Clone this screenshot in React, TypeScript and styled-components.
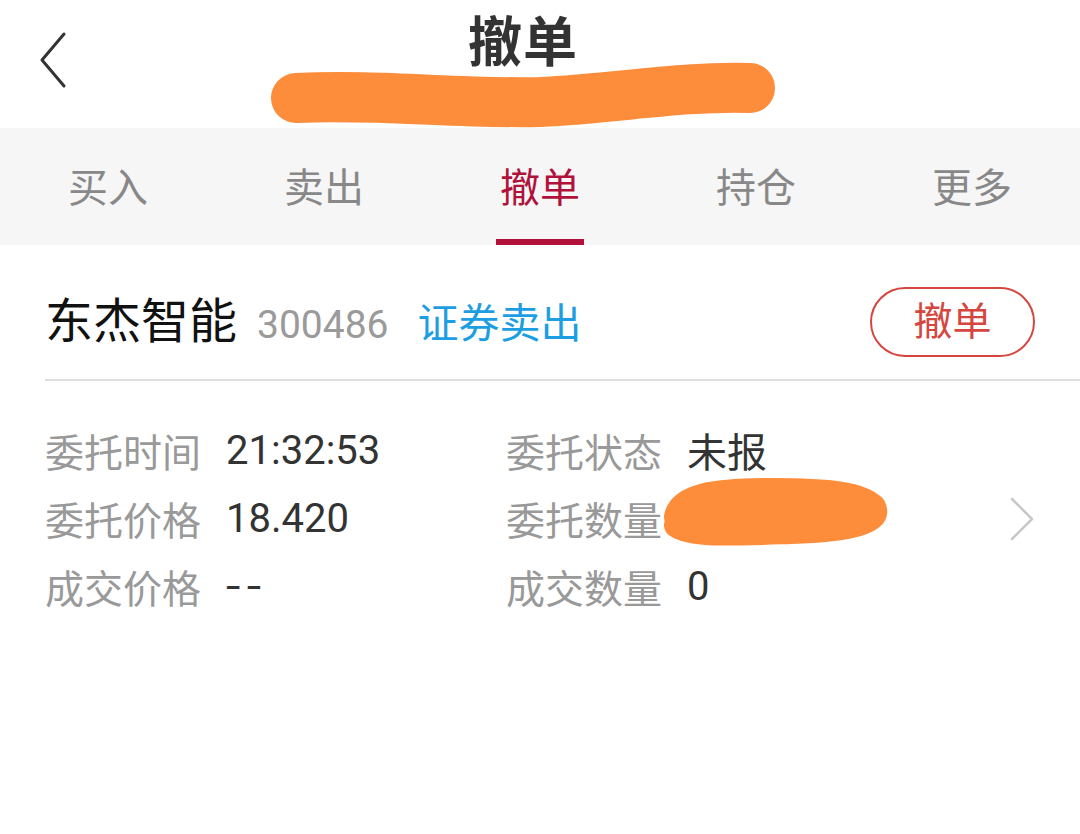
import React from "react"
import styled, { createGlobalStyle } from "styled-components"

const GlobalStyle = createGlobalStyle`
  html, body {
    margin: 0;
    padding: 0;
    background: #fff;
    font-family: Roboto, "Noto Sans CJK SC", sans-serif;
  }
`

const tabs = ["买入", "卖出", "撤单", "持仓", "更多"]

const details = [
  { label: "委托时间", value: "21:32:53" },
  { label: "委托状态", value: "未报" },
  { label: "委托价格", value: "18.420" },
  { label: "委托数量", value: "" },
  { label: "成交价格", value: "--" },
  { label: "成交数量", value: "0" },
]

export default function App() {
  return (
    <>
      <GlobalStyle />
      <S.Page>
        <S.Header>
          <S.Back>
            <svg width="30" height="58" viewBox="0 0 30 58" fill="none">
              <path d="M26 3 L4 29 L26 55" stroke="#333" strokeWidth="3" strokeLinecap="round" strokeLinejoin="round" />
            </svg>
          </S.Back>
          <S.Title>撤单</S.Title>
          <div />
          {/* redaction scribble over the account line */}
          <S.Scribble width="520" height="80" viewBox="0 0 520 80" style={{ left: 262, top: 56 }}>
            <path
              d="M34 42 C 118 38, 198 48, 278 46 C 358 42, 418 30, 488 32"
              stroke="#fd8c3b"
              strokeWidth="50"
              strokeLinecap="round"
              fill="none"
            />
          </S.Scribble>
        </S.Header>

        <S.TabBar>
          {tabs.map((t) => (
            <S.Tab key={t} active={t === "撤单"}>
              <span>{t}</span>
            </S.Tab>
          ))}
        </S.TabBar>

        <S.StockRow>
          <S.StockInfo>
            <S.StockName>东杰智能</S.StockName>
            <S.StockCode>300486</S.StockCode>
            <S.OrderType>证券卖出</S.OrderType>
          </S.StockInfo>
          <S.CancelButton>撤单</S.CancelButton>
        </S.StockRow>
        <S.Divider />

        <S.Details>
          <S.DetailGrid>
            {details.map(({ label, value }) => (
              <S.DetailItem key={label}>
                <S.Label>{label}</S.Label>
                <S.Value dashed={value === "--"}>{value}</S.Value>
              </S.DetailItem>
            ))}
          </S.DetailGrid>
          <S.Chevron>
            <svg width="26" height="46" viewBox="0 0 26 46" fill="none">
              <path d="M3 3 L23 23 L3 43" stroke="#c8c8c8" strokeWidth="2.5" strokeLinecap="round" strokeLinejoin="round" />
            </svg>
          </S.Chevron>
          <S.Scribble width="250" height="72" viewBox="0 0 250 72" style={{ left: 651, top: 96 }}>
            <path
              d="M26 40 C 30 20, 60 14, 120 14 C 180 14, 210 18, 222 30 C 230 44, 200 52, 140 54 C 80 56, 40 58, 26 48"
              stroke="#fd8c3b"
              strokeWidth="26"
              strokeLinecap="round"
              strokeLinejoin="round"
              fill="#fd8c3b"
            />
          </S.Scribble>
        </S.Details>
      </S.Page>
    </>
  )
}

const S = {
  Page: styled.div`
    position: relative;
    width: 1080px;
    height: 834px;
    background: #fff;
    overflow: hidden;
  `,
  Header: styled.div`
    position: relative;
    height: 128px;
    display: grid;
    grid-template-columns: 1fr auto 1fr;
    align-items: start;
  `,
  Back: styled.div`
    padding: 31px 0 0 38px;
    display: flex;
  `,
  Title: styled.div`
    font-size: 54px;
    font-weight: 700;
    line-height: 88px;
    color: #333;
    letter-spacing: 1px;
    padding-right: 34px;
  `,
  Scribble: styled.svg`
    position: absolute;
    pointer-events: none;
  `,
  TabBar: styled.div`
    display: grid;
    grid-template-columns: repeat(5, 1fr);
    height: 117px;
    background: #f6f6f6;
  `,
  Tab: styled.div<{ active: boolean }>`
    display: flex;
    align-items: center;
    justify-content: center;
    font-size: 40px;
    color: ${({ active }) => (active ? "#b0123c" : "#888")};
    span {
      height: 117px;
      line-height: 122px;
      padding: 0 4px;
      box-sizing: border-box;
      border-bottom: 6px solid ${({ active }) => (active ? "#b0123c" : "transparent")};
    }
  `,
  StockRow: styled.div`
    display: flex;
    align-items: center;
    justify-content: space-between;
    box-sizing: border-box;
    height: 134px;
    padding: 20px 45px 0;
  `,
  StockInfo: styled.div`
    display: flex;
    align-items: baseline;
    padding-bottom: 10px;
  `,
  StockName: styled.span`
    font-size: 48px;
    color: #111;
  `,
  StockCode: styled.span`
    font-size: 39px;
    color: #9a9a9a;
    margin-left: 20px;
  `,
  OrderType: styled.span`
    font-size: 41px;
    color: #1e9ee2;
    margin-left: 29px;
  `,
  CancelButton: styled.button`
    width: 165px;
    height: 70px;
    border: 2.5px solid #d5463f;
    border-radius: 35px;
    background: #fff;
    color: #d5463f;
    font-family: Roboto, "Noto Sans CJK SC", sans-serif;
    font-size: 39px;
    padding: 0;
    line-height: 1;
  `,
  Divider: styled.div`
    height: 2px;
    margin-left: 45px;
    background: #dedede;
  `,
  Details: styled.div`
    position: relative;
    display: flex;
    align-items: center;
    padding: 35px 45px 0 45px;
  `,
  DetailGrid: styled.div`
    flex: 1;
    display: grid;
    grid-template-columns: 461px 1fr;
  `,
  DetailItem: styled.div`
    display: flex;
    align-items: center;
    height: 68px;
    gap: 25px;
    font-size: 39px;
  `,
  Label: styled.span`
    color: #999;
  `,
  Value: styled.span<{ dashed?: boolean }>`
    color: #333;
    font-size: 40px;
    letter-spacing: ${({ dashed }) => (dashed ? "5px" : "0")};
    transform: scaleX(${({ dashed }) => (dashed ? 1.3 : 1)});
    transform-origin: left;
  `,
  Chevron: styled.div`
    display: flex;
    margin-top: 2px;
  `,
}
